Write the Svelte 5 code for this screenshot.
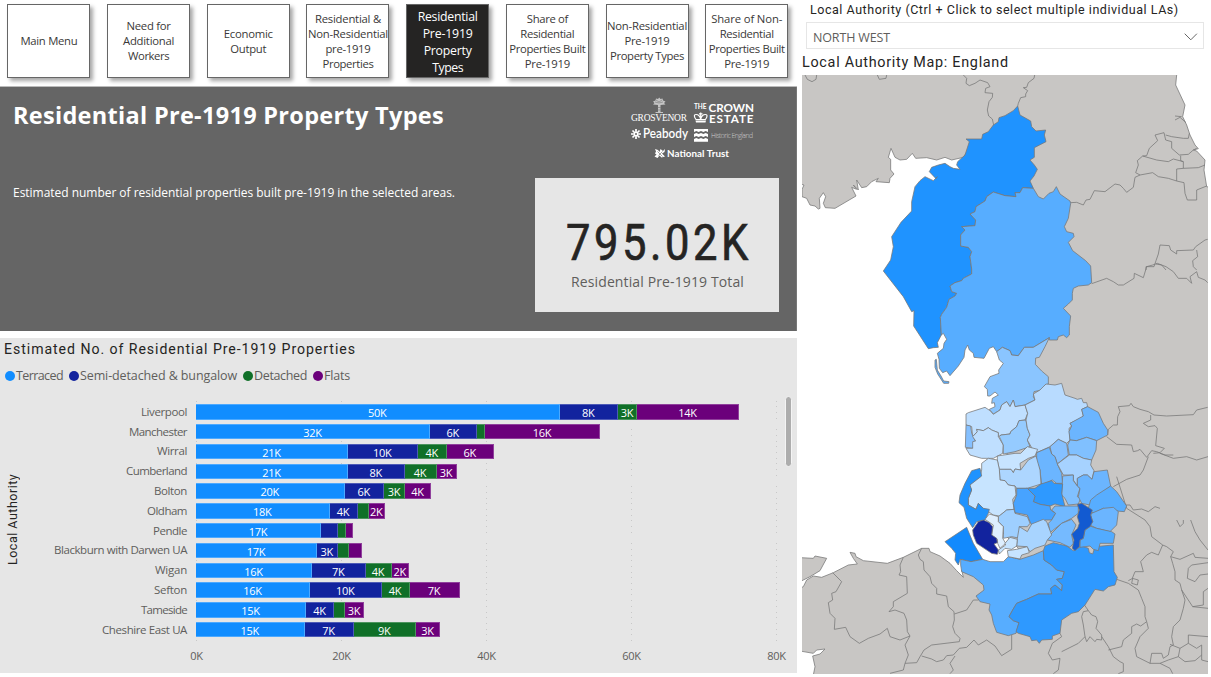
<script>
  // Spreads letters so a line of text takes exactly the given width.
  // An optional squeeze draws the glyphs narrower, like a DIN face.
  function fit(node, arg) {
    const [width, squeeze] = Array.isArray(arg) ? arg : [arg, 1];
    if (squeeze !== 1) node.style.display = 'inline-block';
    const natural = squeeze === 1 ? node.getBoundingClientRect().width : node.offsetWidth;
    const n = node.textContent.trim().length;
    node.style.letterSpacing = `${(width / squeeze - natural) / n}px`;
    if (squeeze !== 1) node.style.transform = `scaleX(${squeeze})`;
  }

  const nav = [
    [['Main Menu', 57]],
    [['Need for', 44], ['Additional', 51], ['Workers', 41]],
    [['Economic', 49], ['Output', 36]],
    [['Residential &', 66], ['Non-Residential', 80], ['pre-1919', 45], ['Properties', 51]],
    [['Residential', 60], ['Pre-1919', 50], ['Property', 48], ['Types', 31]],
    [['Share of', 41], ['Residential', 54], ['Properties Built', 76], ['Pre-1919', 45]],
    [['Non-Residential', 80], ['Pre-1919', 45], ['Property Types', 74]],
    [['Share of Non-', 71], ['Residential', 54], ['Properties Built', 76], ['Pre-1919', 45]]
  ];
  const activeTab = 4;

  const series = [
    { name: 'Terraced', color: '#118dff', w: 47 },
    { name: 'Semi-detached & bungalow', color: '#12239e', w: 157 },
    { name: 'Detached', color: '#107028', w: 53 },
    { name: 'Flats', color: '#6b007b', w: 26 }
  ];

  // name, label width, segment widths, segment labels
  const rows = [
    ['Liverpool', 46, [363.5, 58.5, 19, 102], ['50K', '8K', '3K', '14K']],
    ['Manchester', 58, [234, 46.5, 8.5, 115], ['32K', '6K', '', '16K']],
    ['Wirral', 30, [152, 69.5, 29.5, 46.5], ['21K', '10K', '4K', '6K']],
    ['Cumberland', 61, [152, 56.5, 32, 20], ['21K', '8K', '4K', '3K']],
    ['Bolton', 33, [148.5, 39.5, 21, 26], ['20K', '6K', '3K', '4K']],
    ['Oldham', 40, [133.5, 28, 11, 16.5], ['18K', '4K', '', '2K']],
    ['Pendle', 34, [125, 16.5, 8, 7], ['17K', '', '', '']],
    ['Blackburn with Darwen UA', 133, [121, 20.5, 11.5, 13], ['17K', '3K', '', '']],
    ['Wigan', 32, [116, 53.5, 26, 17.5], ['16K', '7K', '4K', '2K']],
    ['Sefton', 33, [114, 71.5, 28, 50], ['16K', '10K', '4K', '7K']],
    ['Tameside', 46, [110, 28, 11, 19], ['15K', '4K', '', '3K']],
    ['Cheshire East UA', 85, [108.5, 49, 62.5, 24], ['15K', '7K', '9K', '3K']]
  ];

  const upper = [
    ['#1f93ff', '653,108 660,135 692,153 695,170 708,183 737,180 733,195 738,215 703,233 703,262 690,270 703,285 712,298 702,318 690,333 700,355 668,353 660,368 645,368 648,380 615,377 580,366 560,380 555,393 528,410 525,425 510,432 527,450 525,467 485,470 495,480 482,495 482,528 505,532 515,545 510,560 515,597 515,612 490,625 485,632 465,638 450,648 455,665 470,670 465,678 447,688 440,712 425,733 421,742 424,795 412,818 415,832 400,833 385,836 341,768 342,722 335,725 310,680 250,603 272,570 280,530 275,500 303,457 335,423 335,395 345,350 360,332 375,320 400,332 412,320 408,326 388,305 395,292 415,285 435,280 450,290 460,295 480,298 470,285 473,275 495,255 508,215 498,207 545,207 548,193 565,185 580,165 595,155 597,143 615,137 640,122'],
    ['#57adff', '700,355 715,380 730,387 747,370 760,365 769,350 780,372 810,393 812,400 805,445 793,470 800,485 820,490 822,500 805,517 818,542 857,572 872,588 875,638 865,645 835,648 820,655 817,670 817,690 805,702 790,715 812,738 808,770 808,795 800,803 790,795 775,800 772,810 748,810 748,803 700,832 673,832 655,857 635,855 630,842 607,832 590,845 580,830 568,835 552,865 522,862 520,850 508,840 503,825 495,840 492,862 475,888 450,917 440,903 428,908 418,895 417,868 412,850 430,835 432,820 440,808 430,790 424,795 421,742 425,733 440,712 447,688 465,678 470,670 455,665 450,648 465,638 485,632 490,625 515,612 515,597 510,560 515,545 505,532 482,528 482,495 495,480 485,470 525,467 527,450 510,432 525,425 528,410 555,393 560,380 580,366 615,377 648,380 645,368 660,368 668,353'],
    ['#57adff', '405,870 409,868 412,900 423,918 431,933 447,935 446,940 431,940 413,912 405,892'],
    ['#8ac5ff', '748,803 735,830 718,862 707,864 706,883 725,903 745,920 745,942 735,945 733,958 702,965 700,980 705,990 675,1005 645,1010 640,990 630,1010 620,995 605,1005 600,1020 580,1032 568,1018 585,1010 583,998 575,1000 577,985 595,975 585,966 570,978 563,978 562,958 553,950 570,920 597,910 596,900 610,880 598,870 590,845 607,832 630,842 635,855 655,857 673,832 700,832']
  ];

  const middle = [
    ['#bfdfff', '78,102 85,98 135,82 150,92 160,103 180,90 185,75 200,65 210,80 220,60 225,80 255,75 263,100 255,120 237,122 230,140 212,155 210,162 183,165 175,170 175,158 155,150 145,143 130,152 110,148 112,155 98,170 95,140 78,135'],
    ['#85c0ff', '78,135 92,138 95,160 107,185 98,205 76,202'],
    ['#bfdfff', '98,185 107,183 98,170 112,155 110,148 130,152 145,143 155,150 175,158 175,170 190,195 188,220 160,235 125,235 90,225 78,205 98,205'],
    ['#95cbff', '237,122 258,120 262,145 270,165 262,180 270,200 225,215 190,222 190,195 178,170 183,165 210,162 212,155 230,140'],
    ['#b8dbff', '255,75 285,60 280,42 300,30 318,12 345,15 365,10 375,45 405,55 412,58 425,55 430,68 440,68 443,80 425,88 430,108 422,115 390,130 395,138 387,145 390,180 380,190 355,178 330,200 290,218 275,215 275,203 262,180 270,165 262,145 258,120 263,100'],
    ['#6bb5ff', '425,88 443,80 475,97 490,130 503,150 503,165 470,182 440,172 410,182 390,180 387,155 395,138 390,130 430,108'],
    ['#80c0ff', '390,180 410,182 440,172 470,182 468,210 455,240 430,235 410,225 388,225 383,195'],
    ['#85c0ff', '330,200 355,178 380,190 385,225 352,252 345,230 335,222'],
    ['#6bb5ff', '290,218 328,202 335,222 345,230 352,252 365,280 368,310 350,310 337,300 305,315 300,270 290,245'],
    ['#c7e4ff', '172,240 172,228 225,220 242,220 262,200 293,208 285,228 265,235 240,250 242,270 225,267 220,278 213,268 178,268'],
    ['#add6ff', '178,268 213,268 220,278 225,267 242,270 265,240 288,228 300,270 303,312 262,325 230,325 225,318 205,315 195,302 180,300'],
    ['#c7e4ff', '125,250 145,235 172,240 178,268 180,300 195,302 205,315 225,318 228,345 218,358 222,388 200,390 178,408 160,405 145,395 130,385 115,370 108,388 85,375 85,355 95,330 88,315 120,290 125,270'],
    ['#1f93ff', '95,272 120,265 125,288 90,315 95,330 85,355 85,375 108,388 115,370 130,385 148,388 145,400 135,420 110,425 98,443 80,415 72,382 57,368 60,345 75,310'],
    ['#a6d2ff', '352,252 388,225 410,225 430,235 455,240 452,255 462,272 456,298 442,285 430,285 412,295 412,318 400,300 400,285 370,285'],
    ['#80c0ff', '368,288 400,285 400,302 412,318 420,325 412,350 422,355 415,372 385,375 375,355 365,345'],
    ['#6bb5ff', '412,318 412,295 430,285 442,285 456,298 462,275 502,270 512,318 470,350 450,375 425,370 415,350 420,325'],
    ['#57adff', '512,318 530,335 560,378 553,395 520,392 490,385 460,400 445,385 452,360 470,345'],
    ['#2e99ff', '260,325 285,325 303,312 335,302 342,310 368,312 365,340 375,380 345,372 330,378 300,373 280,365 285,348'],
    ['#47a3ff', '230,325 262,325 285,348 280,365 300,373 330,378 332,390 347,400 335,420 315,420 305,430 275,435 270,425 262,405 225,398 220,370 230,345'],
    ['#70b8ff', '335,390 345,378 375,378 415,378 415,400 395,415 365,430 330,458 325,430 335,420 347,400'],
    ['#75baff', '330,465 365,430 395,418 408,435 395,465 400,490 390,502 360,488 322,480'],
    ['#6bb5ff', '455,400 490,385 520,382 535,395 530,435 510,455 470,445 450,435 458,425 452,405'],
    ['#52abff', '435,450 450,438 470,445 515,455 525,462 520,490 480,490 475,512 460,508 450,498 420,502 420,480 430,475'],
    ['#125ad1', '412,373 425,370 457,390 452,405 458,425 450,440 435,450 430,475 420,480 418,500 405,512 397,505 402,480 395,462 413,445 418,430 412,410 418,390'],
    ['#9ecfff', '175,410 200,390 222,388 225,400 262,410 270,430 262,440 238,440 240,475 215,470 190,475 190,440 175,425'],
    ['#deefff', '135,418 148,402 175,410 175,425 190,440 188,475 197,490 180,505 173,490 172,478 155,465 160,435'],
    ['#12239e', '98,450 115,425 130,420 148,428 158,440 155,465 170,475 172,488 162,492 175,510 172,523 155,520 110,490 100,465'],
    ['#a8d4ff', '238,440 262,455 275,432 310,418 320,425 335,465 322,480 315,495 285,505 270,515 260,500 230,498 232,475'],
    ['#c7e4ff', '195,490 210,472 232,478 230,498 215,508 195,505 178,522 175,510 197,495'],
    ['#c7e4ff', '202,512 230,508 262,500 268,518 245,525 240,537 205,530']
  ];

  const lower = [
    ['#128afd', '435,65 500,22 520,70 548,118 513,125 480,118 475,135 465,120 467,100 455,85'],
    ['#57adff', '482,118 513,125 548,118 570,125 610,125 625,110 660,118 700,105 730,92 732,120 755,135 770,150 793,155 787,175 770,178 787,195 785,212 765,195 752,205 755,222 715,222 680,238 650,250 638,270 627,290 640,302 657,308 648,340 625,347 590,337 580,310 575,285 567,270 570,252 540,245 528,228 552,210 550,195 520,170 485,155 482,135'],
    ['#2e99ff', '730,92 735,78 760,68 800,78 820,92 845,78 865,85 868,98 878,102 885,80 940,75 942,155 952,172 945,195 925,200 910,213 885,208 855,255 835,275 815,280 785,300 780,340 757,348 757,358 725,360 718,370 710,360 695,362 690,350 655,340 648,335 657,308 640,302 627,290 638,270 650,250 680,238 715,222 755,222 752,205 765,195 785,212 787,195 770,178 787,175 793,155 770,150 755,135 732,120']
  ];

  const landTop = [
    '15,15 22,28 36,35 48,28 50,15', '232,15 238,28 258,25 260,15', '490,15 500,25 498,40 508,47 525,40 540,30 563,38 570,50 557,55 555,68 578,70 577,82 567,95 562,120 566,138 577,147 581,165',
    '704,15 702,25 685,38 680,52 670,53 683,62 677,72 677,80 662,83 655,100 653,108',
    '812,398 830,397 850,405 858,390 870,388 883,362 915,365 945,342 960,345 970,355 980,367 1000,352 1005,322 1020,315 1007,308 1015,285 1012,272 1028,258 1040,257 1048,235 1073,212 1065,195 1092,188 1097,210 1115,215 1115,235 1138,255',
    '1097,195 1115,200 1150,205 1165,205 1168,190', '1028,258 1070,270 1105,275 1120,267 1150,275 1150,295 1130,297 1130,333 1152,338 1155,370 1162,390 1190,390 1190,360 1220,348',
    '1020,315 1058,308 1075,320 1105,325 1130,333', '1138,255 1165,253 1180,240 1190,235', '1142,257 1142,272 1150,275', '1150,295 1195,293 1215,285', '1125,150 1140,142 1158,158', '1125,138 1145,140',
    '1038,600 1038,590 1062,590 1068,572 1075,552 1080,525 1108,527 1112,540 1130,552 1130,542 1180,540 1187,530 1215,510 1223,508', '1068,582 1085,585 1098,600', '1190,540 1193,560 1178,572 1180,590 1190,600',
    '875,641 920,625 940,635 955,645 970,645 1002,625 1003,610 1030,623 1040,590 1058,585 1072,580 1098,590 1120,605 1135,625 1160,625 1175,640 1170,620 1190,605 1195,622 1215,630 1223,638'
  ];
  const landMid = [
    '503,165 505,148 520,135 532,135 533,110 540,95 535,80 568,77 573,70 580,80 600,88 625,95 642,105 680,108 760,104 770,90 803,82',
    '500,170 530,193 575,195 580,215 593,212 600,208 620,232 635,212 650,215 675,225 700,225', '632,105 632,120 610,130 625,140 645,137 652,145 647,197 673,205 660,218 640,220', '520,320 560,298 600,285 610,270 625,230',
    '558,375 570,375 580,390 605,387 625,395 645,380 660,385', '660,220 700,235 740,230 770,240 804,230'
  ];
  const landLow = [
    '98,158 125,185 108,215 95,220 98,240 85,248 90,280 105,295 103,328 137,322 150,350 178,370 205,355 240,342 262,325 270,350 300,360 330,348',
    '310,112 300,135 302,155 297,165 320,170 322,220 280,245 280,260 267,275 285,270 312,280 320,300 322,335 330,348 315,375 325,405 315,430 310,450 270,460',
    '365,85 355,105 360,118 370,125 372,150 390,170 395,190 410,205 410,222 440,228 445,260 462,275 463,300 458,320 465,340 480,355 478,365 395,375 372,390 360,410 350,428 315,430',
    '463,282 500,270 520,240 535,240', '365,408 395,417 410,425 430,420 440,407 460,405 478,385 500,382 522,360 535,375 560,360 585,378 605,407 635,388 635,345', '465,408 450,430 460,450 450,461',
    '780,340 785,350 757,370 745,400 757,420 780,415 775,450 760,461', '785,395 835,370 855,350 850,315 845,290 850,275 865,272 875,285 888,290 893,305 888,325 905,345 905,360 890,358 885,365 870,350 860,365 855,350', '850,250 865,272', '905,350 925,380 940,410 960,425 970,430 970,455 955,461',
    '950,178 985,190 1015,210 1025,235 1035,260 1035,290 1040,305 1022,318 1010,312 995,320 995,340 970,360 965,380 925,390',
    '985,182 998,175 995,190 1012,195 1015,180 997,175 1005,155 1030,155 1022,125 1040,105 1055,97 1075,105 1088,75 1055,50 1050,20 1035,0 980,-35 950,-130',
    '1040,305 1045,325 1020,350 1005,385 1010,410 1050,430 1080,430 1110,445 1118,461', '1050,430 1055,400 1085,400 1090,415 1105,405 1110,380 1120,375 1115,350 1120,320 1140,300 1150,265 1155,240 1145,210 1140,190 1125,180 1125,155 1118,130 1112,110 1120,95 1100,80 1088,75',
    '1112,110 1140,118 1180,100 1185,112 1224,115', '1165,145 1175,135 1224,128', '1165,145 1162,175 1185,185 1200,165 1224,162', '1130,0 1140,20 1150,10 1150,0', '1172,0 1185,35 1200,60 1224,90', '1145,210 1178,260 1210,255 1210,215 1224,205', '1178,260 1224,265', '1110,373 1140,385 1165,370 1165,345 1224,350', '1165,370 1190,385 1205,375 1205,420 1224,425', '1140,385 1135,410 1155,425 1185,422 1205,405', '1080,430 1105,420 1135,410'
  ];
</script>

<main>
  <section class="left">
    <nav>
      {#each nav as lines, i}
        <button class:active={i === activeTab}>
          {#each lines as [t, w]}<span class="line"><span use:fit={w}>{t}</span></span>{/each}
        </button>
      {/each}
    </nav>

    <header>
      <div class="intro">
        <h1><span use:fit={431}>Residential Pre-1919 Property Types</span></h1>
        <p><span use:fit={442}>Estimated number of residential properties built pre-1919 in the selected areas.</span></p>
      </div>
      <div class="side">
        <svg class="logos" width="128" height="66" viewBox="628 96 128 66" fill="#fff">
          <path d="M658 112V105L653 104.500 654.500 103 653 101.500 655.500 100.500 656 98.500 658 99 659.200 97.500 660.500 99 662.500 98.500 663 100.500 665.500 101.500 664 103 665.500 104.500 660.500 105V112H663V113H655.500V112Z" fill="#c4c4c4" />
          <path d="M655 102l4 1 4-1M656 100l3 2 3-2M657.500 107.500h3.500M657.500 110h3.500" stroke="#777" stroke-width=".6" fill="none" />
          <text x="631" y="121" font-family="Liberation Serif" font-size="9.500" textLength="56">GROSVENOR</text>
          <g font-family="Lato" font-weight="700">
            <text x="694" y="109" font-size="6.500" textLength="12.500">THE</text>
            <text x="708.500" y="112.300" font-size="11.700" textLength="45.500">CROWN</text>
            <text x="709" y="122.800" font-size="11.700" textLength="44.500">ESTATE</text>
          </g>
          <path d="M696 122.500h9.500l.5-2h-10.500z" />
          <path d="M696 119.500c-2-2.500-2.300-5 0-5 2 0 4 1.500 4.700 5 .7-3.500 2.700-5 4.700-5 2.300 0 2 2.500 0 5zM700.700 112.500v7M699 113.800h3.500" fill="none" stroke="#fff" stroke-width="1.200" />
          <g stroke="#fff" stroke-width="1.700"><path d="M636 129v10M631 134h10M632.500 130.500l7 7M639.500 130.500l-7 7" /></g>
          <circle cx="636" cy="134" r="1" fill="#656565" />
          <text x="643" y="138.300" font-family="Lato" font-weight="600" font-size="12.500" textLength="45" lengthAdjust="spacingAndGlyphs">Peabody</text>
          <path d="M694 129h14v3l-2.300-1-2.400 1-2.300-1-2.400 1-2.300-1-2.300 1zM694 134l2.300-1 2.300 1 2.400-1 2.300 1 2.400-1 2.300 1v3l-2.300-1-2.400 1-2.300-1-2.400 1-2.300-1-2.300 1zM694 139l2.300-1 2.300 1 2.400-1 2.300 1 2.400-1 2.300 1v2.700h-14z" />
          <text x="711" y="138" font-family="Open Sans" font-weight="300" font-size="6.800" fill="#d0d0d0" textLength="42">Historic England</text>
          <path d="M655 149l3 1 1.500 2 1-3 2.500 2 2-2-.5 3-2.500 1.500 3 3-3.500 1-2-2-2 2.500-3-1.500 2-2-1.500-1 1-2z" />
          <path d="M657.500 151.500l5 5M662.500 151.500l-4 4" stroke="#656565" stroke-width=".6" />
          <text x="667" y="157" font-family="Lato" font-weight="700" font-size="9.800" textLength="62">National Trust</text>
        </svg>
        <div class="card">
          <strong><span use:fit={[186, 0.87]}>795.02K</span></strong>
          <em><span use:fit={173}>Residential Pre-1919 Total</span></em>
        </div>
      </div>
    </header>

    <section class="chart">
      <h2><span use:fit={[352, 0.94]}>Estimated No. of Residential Pre-1919 Properties</span></h2>
      <div class="legend">
        {#each series as s}
          <div class="key"><i style="background:{s.color}"></i><span use:fit={s.w}>{s.name}</span></div>
        {/each}
      </div>
      <div class="body">
        <div class="ytitle"><span>Local Authority</span></div>
        <div class="plot">
          {#each rows as [name, w, segs, labels]}
            <div class="row">
              <div class="name"><span use:fit={w}>{name}</span></div>
              {#each segs as v, k}
                <div class="seg" style="width:{v}px;background:{series[k].color}">{labels[k]}</div>
              {/each}
            </div>
          {/each}
        </div>
        <div class="track"><div class="thumb"></div></div>
      </div>
      <div class="axis">
        {#each ['0K', '20K', '40K', '60K', '80K'] as t}<span>{t}</span>{/each}
      </div>
    </section>
  </section>

  <section class="right">
    <h3><span use:fit={[369, 0.94]}>Local Authority (Ctrl + Click to select multiple individual LAs)</span></h3>
    <div class="select">
      <span use:fit={77}>NORTH WEST</span>
      <svg width="14" height="8" viewBox="0 0 14 8"><path d="M.7.700l6.100 6.100L12.900.700" fill="none" stroke="#666" /></svg>
    </div>
    <h2><span use:fit={[207, 0.94]}>Local Authority Map: England</span></h2>
    <svg class="map" width="406" height="599" viewBox="6 15 1218 1797">
      <rect x="6" y="15" width="1218" height="1797" fill="#c8c6c4" />
      <g stroke="#777" stroke-width="2.300" stroke-linejoin="round">
        <path fill="#fff" d="M0,342L12,345L6,358V380L20,385L30,405L45,408L55,417L60,415L58,385L70,368L77,380L70,400L76,413L105,415L168,378L155,352L170,358L160,345L175,360L170,330L185,353L200,350L215,335L235,325L228,335L268,338L270,325L282,312L272,300L272,268L265,262L273,235L285,262L300,270L320,268L337,250L347,265L380,263L410,270L435,262L455,270L490,262L498,250L560,400L600,820L650,880L640,950L600,1380L655,1435L640,1490L540,1495L485,1500L490,1522L470,1502L450,1480L420,1458L390,1445L387,1435H365L310,1462L262,1480L190,1472L168,1460L165,1450L150,1447L160,1465L172,1482L145,1485L100,1508L65,1522L40,1518L20,1530L10,1550L0,1555Z" />
        <path d="M0,1463L40,1465L45,1458L80,1465L60,1502L30,1520L10,1530L0,1535Z" fill="#c8c6c4" />
        <path d="M1130,10V15L1127,45L1155,105L1148,140L1160,165L1170,195L1185,225L1195,236L1180,240L1190,243L1215,270L1212,300L1220,350L1230,352V10Z" fill="#fff" />
        <path d="M0,1743L40,1750L50,1740L75,1737L60,1752L38,1758L45,1790L40,1815L0,1820Z" fill="#fff" />
        <g fill="none">
          {#each landTop as p}<polyline points={p} />{/each}
          <g transform="translate(420 930)">{#each landMid as p}<polyline points={p} />{/each}</g>
          <g transform="translate(0 1350)">{#each landLow as p}<polyline points={p} />{/each}</g>
        </g>
        {#each upper as [c, p]}<polygon fill={c} points={p} />{/each}
        <g transform="translate(0 1350)">{#each lower as [c, p]}<polygon fill={c} points={p} />{/each}</g>
        <g transform="translate(420 930)">{#each middle as [c, p]}<polygon fill={c} points={p} />{/each}</g>
      </g>
    </svg>
  </section>
</main>

<style>
  :global(body) { margin: 0; background: #fff; overflow: hidden; }
  main { display: flex; width: 1211px; height: 677px; font-family: "Open Sans", "Noto Sans", sans-serif; color: #252423; }
  span { white-space: nowrap; }
  h1, h2, h3, p { margin: 0; }
  h2, h3, .card strong, .ytitle { font-family: Roboto, sans-serif; font-weight: 400; }
  h2 span, h3 span { transform-origin: left center; }
  .left { width: 797px; display: flex; flex-direction: column; }
  nav { display: flex; gap: 16.700px; height: 82px; padding: 4px 0 0 7.400px; border-bottom: 1px solid #bbb; }
  button { box-sizing: border-box; flex: none; width: 83px; height: 74px; padding: 0 0 1px; border: 1px solid #666; border-radius: 0; background: #fff; box-shadow: 3px 3px 4px rgba(0,0,0,.35); display: flex; flex-direction: column; align-items: center; justify-content: center; font: 11.300px/15px "Open Sans", sans-serif; color: #3a3938; }
  .line { display: flex; justify-content: center; width: 83px; }
  button.active { padding: 1px 0 0; background: #252423; color: #fff; font-size: 12.300px; line-height: 17px; }
  header { box-sizing: border-box; height: 244px; background: #656565; border-right: 1px solid #777; display: flex; justify-content: space-between; color: #fff; }
  .intro { padding: 13px 0 0 13px; }
  h1 { font-size: 23.500px; line-height: 30px; font-weight: 700; }
  p { font-size: 12px; line-height: 18px; margin-top: 54px; }
  .side { width: 261px; padding-top: 9px; display: flex; flex-direction: column; }
  .logos { margin-left: 93px; }
  .card { box-sizing: border-box; width: 244px; height: 134px; margin-top: 16px; padding-top: 35px; background: #e6e6e6; display: flex; flex-direction: column; align-items: center; color: #252423; }
  .card strong { height: 60px; font-size: 50px; line-height: 60px; font-weight: 400; -webkit-text-stroke: .7px #252423; display: flex; justify-content: center; width: 244px; padding-left: 4px; }
  .card em { font-style: normal; font-size: 14px; line-height: 20px; color: #605e5c; margin: -1px 0 0 1px; }
  .chart { height: 335px; margin-top: 7px; background: #e6e6e6; }
  .chart h2 { height: 20px; font-size: 15px; line-height: 22px; padding-left: 4px; }
  .legend { display: flex; gap: 6px; padding: 8px 0 1px 5px; height: 19px; font-size: 12.500px; line-height: 19px; color: #605e5c; }
  .key { display: flex; align-items: center; gap: 1px; height: 19px; }
  .key i { width: 10px; height: 10px; border-radius: 50%; }
  .body { display: flex; height: 246px; margin-top: 10px; }
  .ytitle { width: 24px; display: flex; align-items: center; justify-content: center; writing-mode: vertical-rl; transform: rotate(180deg); font-size: 12.500px; padding-top: 0; }
  .ytitle span { letter-spacing: .5px; }
  .plot { width: 760px; padding-top: 6px; background: repeating-linear-gradient(#e6e6e6 0 4.700px, transparent 4.700px 5.700px), repeating-linear-gradient(90deg, #c8c8c8 0 1px, transparent 1px 145px) 172px 0 / 581px 100% no-repeat; }
  .row { display: flex; align-items: center; height: 19.800px; }
  .name { width: 163px; margin-right: 9px; display: flex; justify-content: flex-end; font-size: 11.500px; line-height: 16px; color: #605e5c; }
  .seg { box-sizing: border-box; height: 15.500px; border: 1px solid rgba(255,255,255,.25); border-left-width: 0; flex: none; font-size: 11px; line-height: 16px; letter-spacing: -.3px; color: #fff; display: flex; justify-content: center; }
  .track { width: 7px; margin-left: 1px; }
  .thumb { height: 71px; border-radius: 4px; background: #adadad; border: 1px solid #f4f4f4; box-sizing: border-box; }
  .axis { display: flex; margin-left: 124px; height: 20px; padding-top: 4px; font-size: 11px; line-height: 20px; letter-spacing: -.2px; color: #605e5c; }
  .axis span { flex: none; width: 145px; text-align: center; }
  .right { padding-left: 5px; width: 409px; }
  h3 { height: 18px; font-size: 13.300px; line-height: 19px; padding-left: 8px; }
  .select { box-sizing: border-box; display: flex; align-items: center; justify-content: space-between; width: 398px; height: 27px; margin: 4px 0 0 4px; padding: 2px 5px 0 6px; border: 1px solid #e6e6e6; font-size: 12.500px; color: #605e5c; }
  .select span { padding-top: 1px; }
  .right h2 { height: 20px; font-size: 15.300px; line-height: 20px; margin-top: 3px; }
  .map { display: block; margin-top: 3px; }
</style>
